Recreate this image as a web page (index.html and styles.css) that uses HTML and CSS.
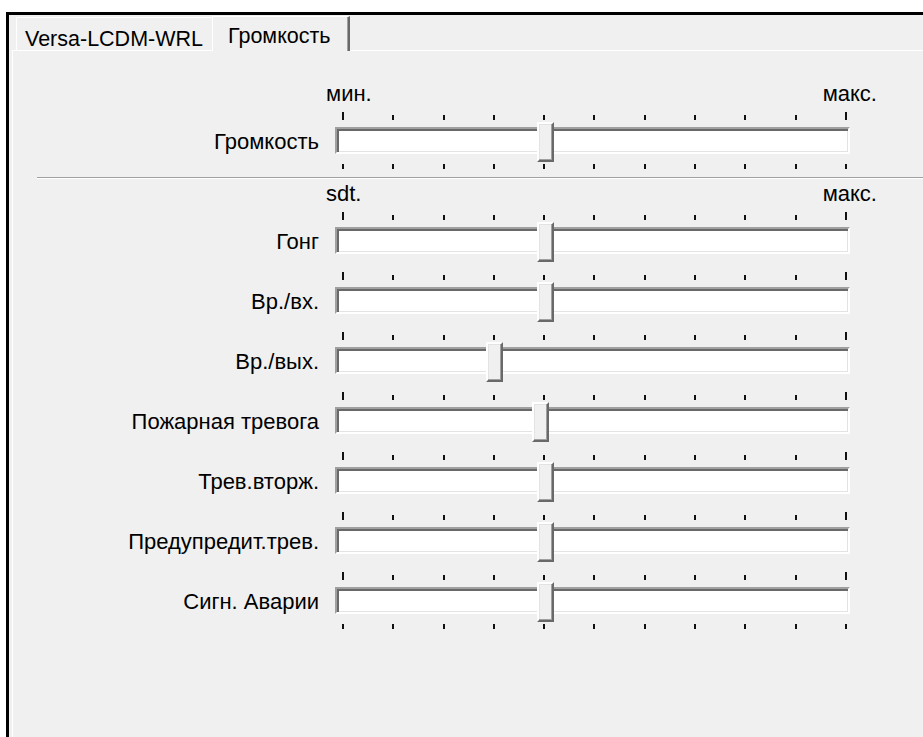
FILE: index.html
```html
<!DOCTYPE html>
<html lang="ru">
<head>
    <meta charset="UTF-8">
    <meta name="viewport" content="width=device-width, initial-scale=1.0">
    <title>Громкость</title>
    <link rel="stylesheet" href="styles.css">
</head>
<body>

    <div class="window">
        <div class="tabs">
            <div class="tab">Versa-LCDM-WRL</div>
            <div class="tab active">Громкость</div>
        </div>

        <div class="panel">
            <!-- master volume -->
            <div class="scale"><span>мин.</span><span>макс.</span></div>
            <div class="row">
                <label>Громкость</label>
                <div class="slider" style="--v: 40">
                    <div class="ticks top"><i></i><i></i><i></i><i></i><i></i><i></i><i></i><i></i><i></i><i></i><i></i></div>
                    <div class="track"></div>
                    <div class="ticks bottom"><i></i><i></i><i></i><i></i><i></i><i></i><i></i><i></i><i></i><i></i><i></i></div>
                    <div class="thumb"></div>
                </div>
            </div>

            <div class="separator"></div>

            <!-- per-event volumes -->
            <div class="scale second"><span>sdt.</span><span>макс.</span></div>
            <div class="rows">
                <div class="row">
                    <label>Гонг</label>
                    <div class="slider" style="--v: 40">
                        <div class="ticks top"><i></i><i></i><i></i><i></i><i></i><i></i><i></i><i></i><i></i><i></i><i></i></div>
                        <div class="track"></div>
                        <div class="thumb"></div>
                    </div>
                </div>
                <div class="row">
                    <label>Вр./вх.</label>
                    <div class="slider" style="--v: 40">
                        <div class="ticks top"><i></i><i></i><i></i><i></i><i></i><i></i><i></i><i></i><i></i><i></i><i></i></div>
                        <div class="track"></div>
                        <div class="thumb"></div>
                    </div>
                </div>
                <div class="row">
                    <label>Вр./вых.</label>
                    <div class="slider" style="--v: 30">
                        <div class="ticks top"><i></i><i></i><i></i><i></i><i></i><i></i><i></i><i></i><i></i><i></i><i></i></div>
                        <div class="track"></div>
                        <div class="thumb"></div>
                    </div>
                </div>
                <div class="row">
                    <label>Пожарная тревога</label>
                    <div class="slider" style="--v: 39">
                        <div class="ticks top"><i></i><i></i><i></i><i></i><i></i><i></i><i></i><i></i><i></i><i></i><i></i></div>
                        <div class="track"></div>
                        <div class="thumb"></div>
                    </div>
                </div>
                <div class="row">
                    <label>Трев.вторж.</label>
                    <div class="slider" style="--v: 40">
                        <div class="ticks top"><i></i><i></i><i></i><i></i><i></i><i></i><i></i><i></i><i></i><i></i><i></i></div>
                        <div class="track"></div>
                        <div class="thumb"></div>
                    </div>
                </div>
                <div class="row">
                    <label>Предупредит.трев.</label>
                    <div class="slider" style="--v: 40">
                        <div class="ticks top"><i></i><i></i><i></i><i></i><i></i><i></i><i></i><i></i><i></i><i></i><i></i></div>
                        <div class="track"></div>
                        <div class="thumb"></div>
                    </div>
                </div>
                <div class="row">
                    <label>Сигн. Аварии</label>
                    <div class="slider" style="--v: 40">
                        <div class="ticks top"><i></i><i></i><i></i><i></i><i></i><i></i><i></i><i></i><i></i><i></i><i></i></div>
                        <div class="track"></div>
                        <div class="ticks bottom"><i></i><i></i><i></i><i></i><i></i><i></i><i></i><i></i><i></i><i></i><i></i></div>
                        <div class="thumb"></div>
                    </div>
                </div>
            </div>
        </div>
    </div>

</body>
</html>
```

FILE: styles.css
```css
body {
    margin: 0;
    padding: 0;
    background-color: white;
    color: black;
    font-family: "Liberation Sans", Arial, sans-serif;
    font-size: 22px;
    overflow: hidden;
}

.window {
    margin: 12px 0 0 6px;
    height: calc(100vh - 12px);
    box-sizing: border-box;
    border-top: 3px solid black;
    border-left: 3px solid black;
    background-color: #f0f0f0;
    display: flex;
    flex-direction: column;
}

.tabs {
    height: 35px;
    padding-left: 7px;
    display: flex;
    align-items: flex-end;
    font-size: 21.5px;
}

.tab {
    box-sizing: border-box;
    height: 33px;
    width: 196px;
    padding: 9px 0 0 8px;
    line-height: 24px;
    white-space: nowrap;
    border-top: 1px solid white;
    border-left: 1px solid white;
}

.tab.active {
    position: relative;
    z-index: 1;
    width: 138px;
    height: 35px;
    margin-bottom: -1px;
    padding: 7px 0 0 15px;
    background-color: #f0f0f0;
    border-right: 2px solid #696969;
    box-shadow: inset -1px 0 0 #a0a0a0;
}

.panel {
    flex: 1;
    margin-left: 3px;
    padding-top: 31px;
    border-top: 1px solid white;
    border-left: 1px solid white;
}

.scale {
    margin-left: 313px;
    width: 551px;
    display: flex;
    justify-content: space-between;
    line-height: 24px;
}

.scale.second {
    margin-top: 3px;
}

.row {
    display: grid;
    grid-template-columns: 306px 515px;
    column-gap: 16px;
    align-items: start;
    margin-top: 6px;
}

.rows .row + .row {
    margin-top: 18px;
}

.row label {
    margin-top: 15px;
    padding-top: 3px;
    line-height: 24px;
    text-align: right;
    white-space: nowrap;
}

.slider {
    position: relative;
}

.ticks {
    box-sizing: border-box;
    height: 15px;
    margin: 0 3px 0 7px;
    display: flex;
    justify-content: space-between;
}

.ticks i {
    width: 2px;
    height: 5px;
    background-color: #111;
}

.ticks.top {
    align-items: flex-end;
    padding-bottom: 7px;
}

.ticks.top i:first-child,
.ticks.top i:last-child {
    height: 8px;
}

.ticks.bottom {
    align-items: flex-start;
    padding-top: 10px;
}

.track {
    box-sizing: border-box;
    height: 27px;
    background-color: white;
    border-top: 2px solid #a0a0a0;
    border-left: 2px solid #a0a0a0;
    border-bottom: 2px solid white;
    border-right: 2px solid white;
    box-shadow: inset 2px 2px 0 #696969, inset -1px -1px 0 #e3e3e3;
}

.thumb {
    position: absolute;
    top: 10px;
    left: calc(var(--v) * 5.03px + 0.5px);
    box-sizing: border-box;
    width: 17px;
    height: 40px;
    background-color: #f0f0f0;
    border-top: 2px solid white;
    border-left: 2px solid white;
    border-right: 2px solid #696969;
    border-bottom: 2px solid #696969;
    box-shadow: inset -1px -1px 0 #a0a0a0, inset 1px 1px 0 #e3e3e3;
}

.separator {
    margin: 8px 0 0 24px;
    height: 1px;
    background-color: #a0a0a0;
    border-bottom: 1px solid white;
}
```
